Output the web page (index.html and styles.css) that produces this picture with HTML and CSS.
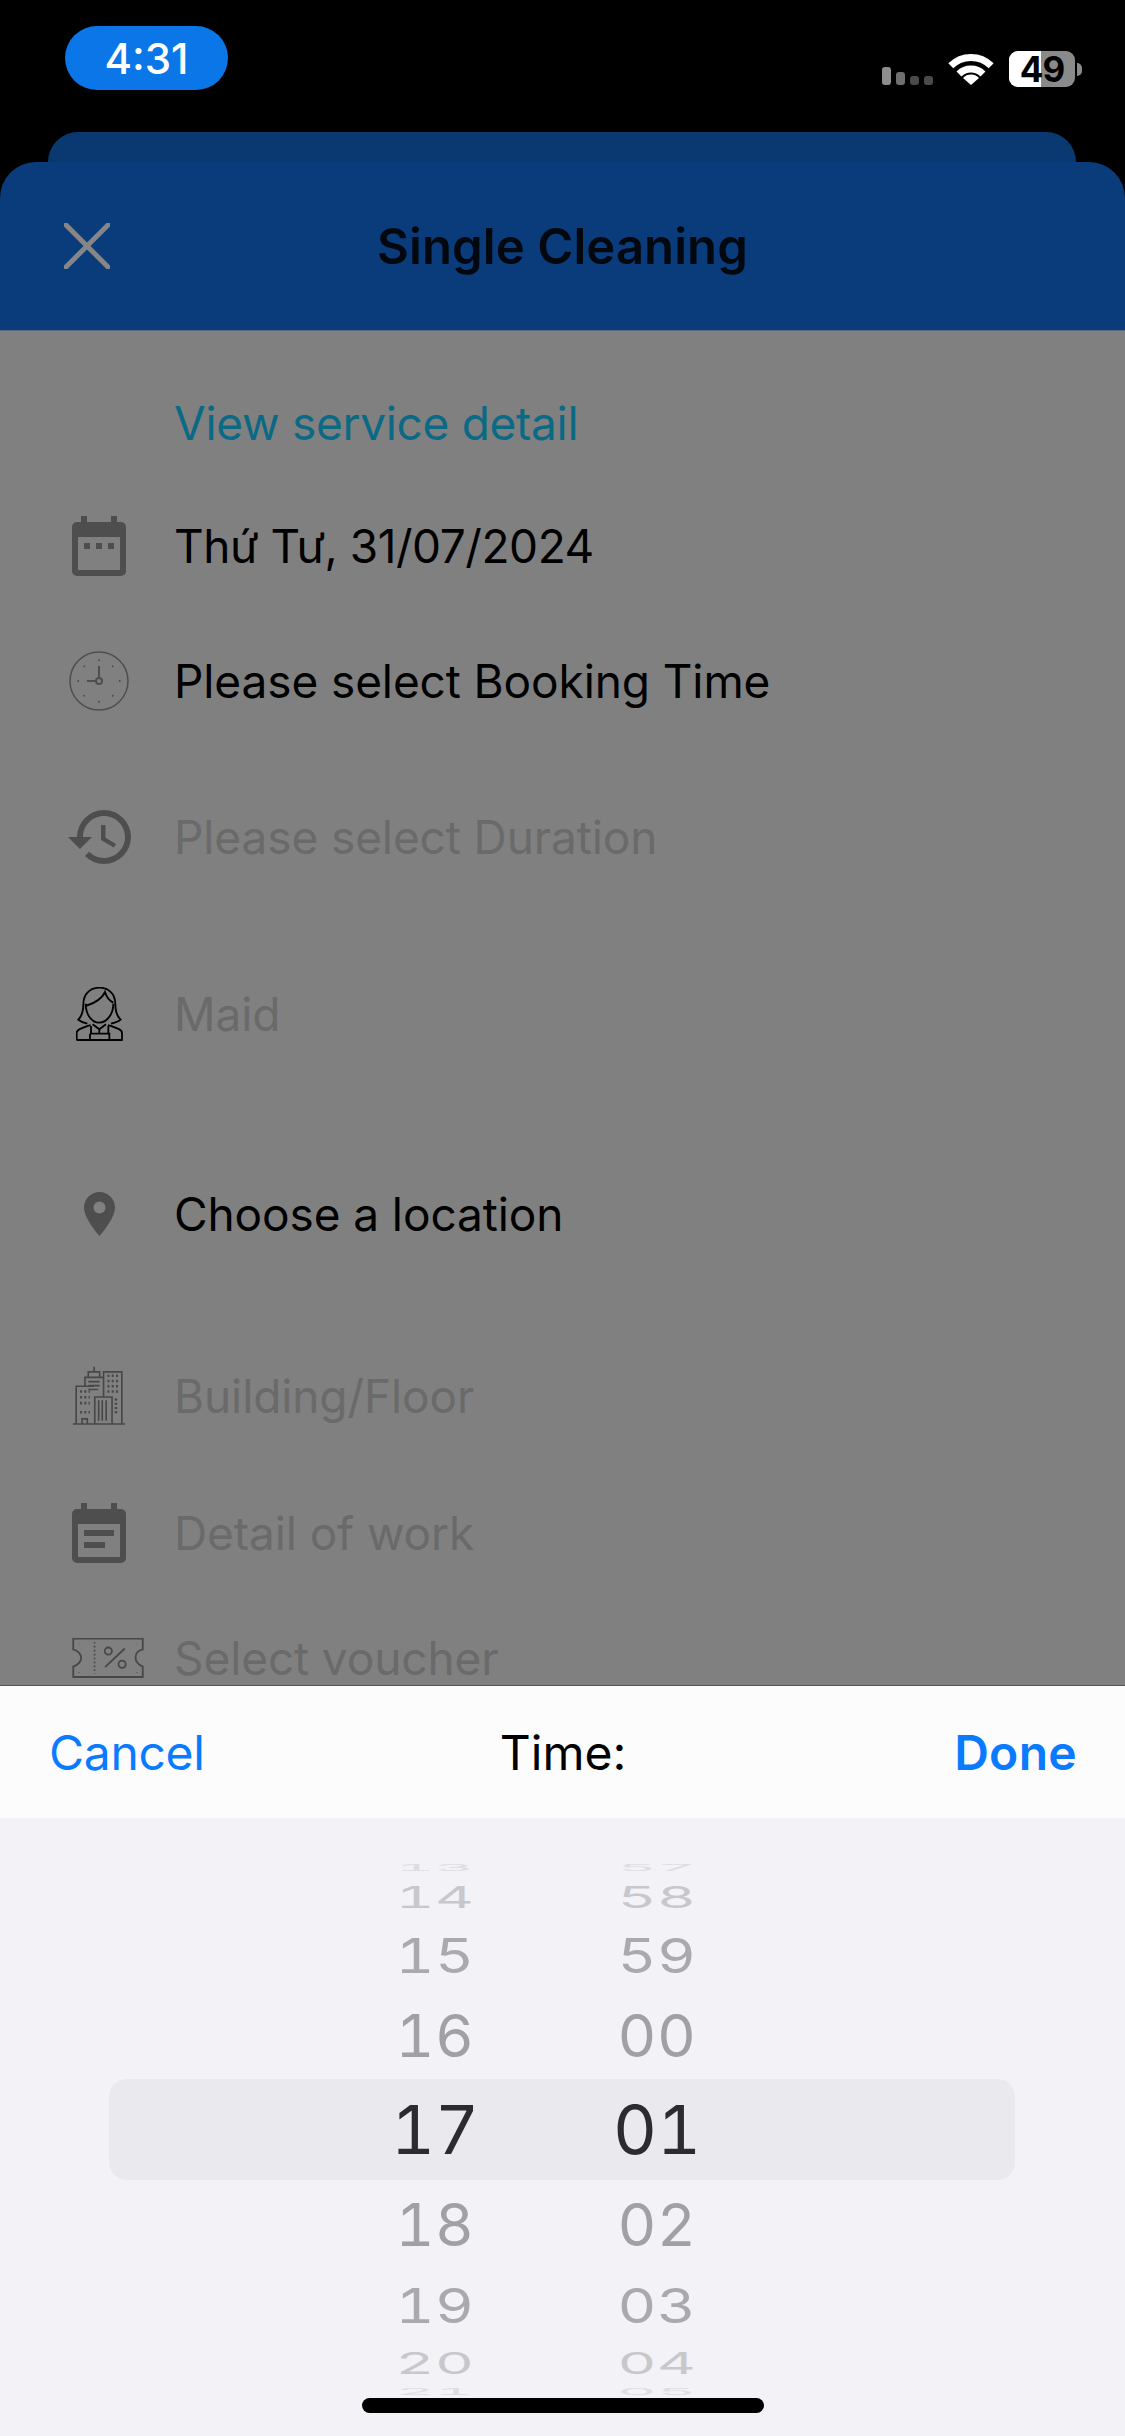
FILE: index.html
```html
<!DOCTYPE html>
<html lang="en">
<head>
<meta charset="utf-8">
<title>Single Cleaning</title>
<link rel="stylesheet" href="styles.css">
</head>
<body>
<div class="phone">
  <div class="statusbar">
    <div class="clock-pill">4:31</div>
    <div class="status-icons">
      <div class="signal"><i class="b1"></i><i class="b2"></i><i class="b3"></i><i class="b4"></i></div>
      <svg class="wifi" width="46" height="33" viewBox="0 0 46 33"><path class="wifi-arc" d="M2.8 13.8A28.5 28.5 0 0 1 43.2 13.8M11 22A17 17 0 0 1 35 22"/><path class="wifi-dot" d="M23 33L15 26A11 11 0 0 1 31 26Z"/></svg>
      <div class="battery"><div class="battery-body"><span class="battery-fill"></span><span class="battery-text">49</span></div><span class="battery-nub"></span></div>
    </div>
  </div>
  <div class="back-sheet"></div>
  <header class="sheet-header">
    <svg class="close" width="46" height="46" viewBox="0 0 46 46"><path d="M2 2L44 44M44 2L2 44"/></svg>
    <h1 class="title">Single Cleaning</h1>
    <span></span>
  </header>
  <main class="form">
    <div class="row"><span class="slot"></span><span class="link">View service detail</span></div>
    <div class="row"><span class="slot">
      <svg width="54" height="60" viewBox="0 0 54 60"><path class="ico" d="M9 0h6v6h24V0h6v6h4a5 5 0 0 1 5 5v44a5 5 0 0 1-5 5H5a5 5 0 0 1-5-5V11a5 5 0 0 1 5-5h4zM6 21v33h42V21z" fill-rule="evenodd"/><path class="ico" d="M12 27h6v6h-6zM24 27h6v6h-6zM36 27h6v6h-6z"/></svg></span><span class="label date">Thứ Tư, 31/07/2024</span></div>
    <div class="row"><span class="slot">
      <svg width="60" height="60" viewBox="0 0 60 60"><circle class="line thin" cx="30" cy="30" r="29"/><path class="line" d="M30 26V15M26.500 30H18"/><circle class="line" cx="30" cy="30" r="3"/><path class="ticks" d="M30 8.500v1.500M30 50v1.500M8.500 30h1.500M50 30h1.500M14.800 14.800l1 1M44.200 14.800l-1 1M14.800 45.200l1-1M44.200 45.200l-1-1"/></svg></span><span class="label">Please select Booking Time</span></div>
    <div class="row"><span class="slot">
      <svg width="63" height="54" viewBox="1 3 21 18"><path class="ico" d="M13 3a9 9 0 0 0-9 9H1l3.890 3.890.07.140L9 12H6c0-3.870 3.130-7 7-7s7 3.130 7 7-3.130 7-7 7c-1.930 0-3.680-.79-4.940-2.060l-1.420 1.420A8.954 8.954 0 0 0 13 21a9 9 0 0 0 0-18zm-1 5v5l4.280 2.540.72-1.210-3.500-2.080V8H12z"/></svg></span><span class="label off">Please select Duration</span></div>
    <div class="row"><span class="slot">
      <svg width="47" height="54" viewBox="78 78 141 162"><path class="maid" d="M112 188C98 185 90 180 85 176C96 165 100 150 100 130C100 95 125 80 148 80C172 80 196 95 196 130C196 150 200 165 212 176C205 182 195 186 183 188M107 128C107 160 125 185 148 185C170 185 190 160 190 128M107 135C130 128 155 115 165 93C170 110 180 120 190 125M80 238V215C80 205 100 200 122 192M216 238V215C216 205 196 200 174 192M80 237H218M128 190L148 205L168 190M123 195V216M175 195V216M120 218H178V237M120 218V237M148 205V216"/></svg></span><span class="label off">Maid</span></div>
    <div class="row"><span class="slot">
      <svg width="31" height="44" viewBox="0 0 31 44"><path class="ico" fill-rule="evenodd" d="M15.500 0C7 0 0 7 0 15.500C0 27 15.500 44 15.500 44S31 27 31 15.500C31 7 24 0 15.500 0zM15.500 9.500a6 6 0 1 1 0 12a6 6 0 0 1 0-12z"/></svg></span><span class="label">Choose a location</span></div>
    <div class="row"><span class="slot">
      <svg width="54" height="60" viewBox="66 70 164 184"><path class="bld" d="M68 248H228M78 248V132H132M162 165V88H218V248M105 132V105H162M115 105V88H150V105M133 88V72M135 248V165H188V248M147 175V238M158 175V238M170 175V238M96 248V232H112V248M115 118H150M115 130H150M115 142H145"/><path class="bld-dots" d="M90 148h30M90 166h30M90 184h30M90 212h30M174 100h32M174 116h32M174 132h32M174 148h32M200 170v50"/></svg></span><span class="label off">Building/Floor</span></div>
    <div class="row"><span class="slot">
      <svg width="54" height="60" viewBox="0 0 54 60"><path class="ico" fill-rule="evenodd" d="M9 0h6v6h24V0h6v6h4a5 5 0 0 1 5 5v44a5 5 0 0 1-5 5H5a5 5 0 0 1-5-5V11a5 5 0 0 1 5-5h4zM6 21v33h42V21z"/><path class="ico" d="M12 27h30v6H12zM12 39h21v6H12z"/></svg></span><span class="label off">Detail of work</span></div>
    <div class="row"><span class="slot slot-wide">
      <svg width="72" height="40" viewBox="66 893 216 122"><path class="tick" d="M68 895H280V928C262 932 258 945 258 953C258 962 265 975 280 980V1012H68V980C85 975 92 962 92 953C92 945 85 932 68 928Z"/><path class="tick-dots" d="M133 905V1003"/><path class="tick-corners" d="M85 909v1M85 997v1M263 909v1M263 997v1"/><circle class="tick" cx="175" cy="933" r="11"/><circle class="tick" cx="217" cy="973" r="11"/><path class="tick" d="M165 982L225 925"/></svg></span><span class="label off">Select voucher</span></div>
  </main>
  <section class="picker">
    <div class="toolbar">
      <span class="tool-btn">Cancel</span>
      <span class="tool-title">Time:</span>
      <span class="tool-btn strong">Done</span>
    </div>
    <div class="wheel-area">
      <div class="highlight"></div>
      <div class="wheel">
        <span class="d d13">13</span><span class="d d13">57</span>
        <span class="d d14">14</span><span class="d d14">58</span>
        <span class="d d15">15</span><span class="d d15">59</span>
        <span class="d d16">16</span><span class="d d16">00</span>
        <span class="d sel">17</span><span class="d sel">01</span>
        <span class="d d16">18</span><span class="d d16">02</span>
        <span class="d d15">19</span><span class="d d15">03</span>
        <span class="d d14">20</span><span class="d d14">04</span>
        <span class="d d13">21</span><span class="d d13">05</span>
      </div>
    </div>
  </section>
  <div class="home-indicator"></div>
</div>
</body>
</html>
```
FILE: styles.css
```css
* { box-sizing: border-box; }
html, body { margin: 0; padding: 0; background: #000; }
body { font-family: Inter, "Liberation Sans", sans-serif; }
.phone { position: relative; width: 1125px; height: 2436px; overflow: hidden; background: #000; display: flex; flex-direction: column; }

.statusbar { height: 132px; flex: none; display: flex; justify-content: space-between; align-items: flex-start; padding: 26px 43px 0 65px; }
.clock-pill { width: 163px; height: 64px; border-radius: 32px; background: #0a76e8; color: #fff; font-size: 42px; font-weight: 500; display: flex; align-items: center; justify-content: center; }
.status-icons { display: flex; align-items: flex-start; gap: 15px; padding-top: 25px; }
.signal { display: flex; align-items: flex-end; gap: 5px; height: 18px; margin-top: 16px; }
.signal i { display: block; width: 9px; border-radius: 3px; }
.signal .b1 { height: 18px; background: #8e8e8e; }
.signal .b2 { height: 13px; background: #6f6f6f; }
.signal .b3 { height: 9px; background: #4a4a4a; }
.signal .b4 { height: 9px; background: #4a4a4a; }
.wifi { margin-top: 1px; }
.wifi-arc { fill: none; stroke: #fff; stroke-width: 7; }
.wifi-dot { fill: #fff; }
.battery { display: flex; align-items: center; gap: 2px; }
.battery-body { position: relative; width: 66px; height: 36px; border-radius: 9px; background: #8a8a8a; display: flex; align-items: center; justify-content: center; }
.battery-fill { position: absolute; left: 0; top: 0; bottom: 0; width: 32px; background: #fff; border-radius: 9px 0 0 9px; }
.battery-text { position: relative; color: #000; font-size: 35px; line-height: 36px; font-weight: 700; letter-spacing: -1px; }
.battery-nub { width: 5px; height: 13px; border-radius: 0 5px 5px 0; background: #8a8a8a; }

.back-sheet { height: 30px; flex: none; margin: 0 49px 0 48px; background: #0a3870; border-radius: 30px 30px 0 0; }
.sheet-header { height: 169px; flex: none; background: #0a3c7c; border-radius: 36px 36px 0 0; display: grid; grid-template-columns: 1fr auto 1fr; align-items: center; padding: 0 64px; border-bottom: 1px solid #5a6a80; }
.close { display: block; }
.close path { fill: none; stroke: #868686; stroke-width: 5; stroke-linecap: round; }
.title { margin: 0; font-size: 49px; font-weight: 600; color: #03070e; letter-spacing: 0.1px; }

.form { height: 1354px; flex: none; overflow: hidden; background: #808080; display: grid; padding-top: 32px; grid-template-rows: 120px 126px 144px 168px 186px 214px 150px 124px 126px; }
.row { display: flex; align-items: center; }
.slot { flex: none; width: 70px; margin: 0 40px 0 64px; display: flex; justify-content: center; }
.slot-wide { justify-content: flex-start; padding-left: 8px; }
.slot svg { display: block; flex: none; }
.label, .link { font-size: 46px; white-space: nowrap; color: #000; letter-spacing: -0.1px; }
.label.date { letter-spacing: -0.45px; }
.label.off { color: #6a6a6a; }
.link { color: #0a6a85; letter-spacing: -0.3px; }
.ico { fill: #4e4e4e; }
.line { fill: none; stroke: #4e4e4e; stroke-width: 2; }
.line.thin { stroke-width: 1.500; }
.ticks { fill: none; stroke: #4e4e4e; stroke-width: 2; }
.maid { fill: none; stroke: #000; stroke-width: 5.500; }
.bld { fill: none; stroke: #474747; stroke-width: 5; }
.bld-dots { fill: none; stroke: #474747; stroke-width: 8; stroke-dasharray: 6 7; }
.tick { fill: none; stroke: #474747; stroke-width: 5.500; }
.tick-dots { fill: none; stroke: #474747; stroke-width: 5; stroke-dasharray: 5 7; }
.tick-corners { fill: none; stroke: #474747; stroke-width: 6; }

.picker { flex: 1; display: flex; flex-direction: column; background: #f2f2f7; }
.toolbar { height: 133px; flex: none; background: #fcfcfd; border-top: 1px solid #555; display: grid; grid-template-columns: 1fr auto 1fr; align-items: center; padding: 0 48px 0 49px; color: #000; font-size: 48px; }
.tool-btn { color: #0a7aff; letter-spacing: -0.3px; }
.tool-btn.strong { font-weight: 600; text-align: right; letter-spacing: 0.3px; }
.wheel-area { position: relative; flex: 1; padding-top: 42px; }
.highlight { position: absolute; left: 109px; top: 261px; width: 906px; height: 101px; border-radius: 18px; background: #e9e9ee; }
.wheel { position: relative; display: grid; grid-template-columns: 222px 222px; padding-left: 324px; grid-template-rows: 16px 42px 74px 86px 102px 88px 74px 42px 16px; }
.d { display: flex; align-items: center; justify-content: center; font-size: 60px; line-height: 1; font-variant-numeric: tabular-nums; letter-spacing: 0.5px; }
.sel { font-size: 68px; color: #2c2c30; letter-spacing: 0; }
.d16 { color: #a0a0a5; transform: scaleY(0.98); }
.d15 { color: #a9a9ae; transform: scaleY(0.8); }
.d14 { color: #c8c8cc; transform: scaleY(0.5); }
.d13 { color: #dedee2; transform: scaleY(0.14); }

.home-indicator { position: absolute; left: 362px; top: 2398px; width: 402px; height: 15px; border-radius: 8px; background: #000; }
```
